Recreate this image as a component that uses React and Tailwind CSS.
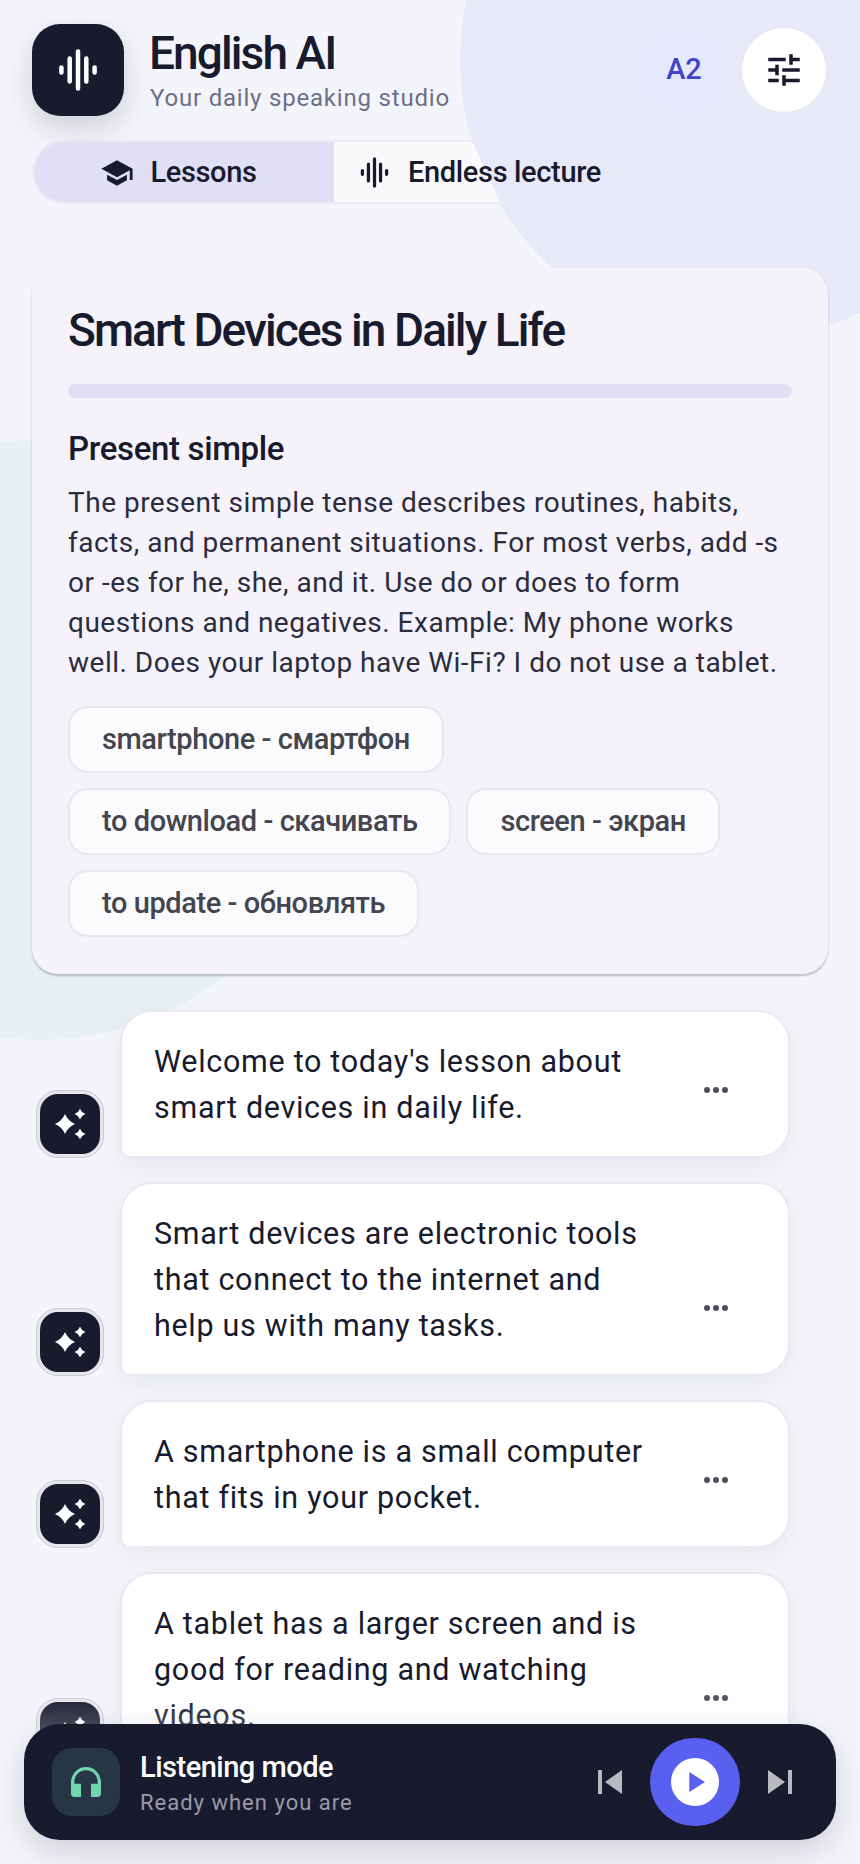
import { MdSchool, MdTune, MdHeadphones, MdSkipPrevious, MdSkipNext, MdPlayArrow } from "react-icons/md";

const chips = [
  ["smartphone - смартфон"],
  ["to download - скачивать", "screen - экран"],
  ["to update - обновлять"],
];

const messages = [
  { text: "Welcome to today's lesson about smart devices in daily life." },
  { text: "Smart devices are electronic tools that connect to the internet and help us with many tasks." },
  { text: "A smartphone is a small computer that fits in your pocket." },
  { text: "A tablet has a larger screen and is good for reading and watching videos." },
];

function Bars({ className }) {
  return (
    <svg viewBox="0 0 48 48" className={className} fill="none" stroke="currentColor" strokeWidth="4.5" strokeLinecap="round">
      <path d="M7.4 21.5v5M15.7 12.5v23M24 5.5v37M32.3 12.5v23M40.6 21.5v5" />
    </svg>
  );
}

function Sparkles() {
  return (
    <svg viewBox="0 0 40 40" className="h-[40px] w-[40px]" fill="white">
      <path d="M15 10Q18 17 25 20Q18 23 15 30Q12 23 5 20Q12 17 15 10Z" />
      <path d="M30 4.5Q31.5 8.5 35.5 10Q31.5 11.5 30 15.5Q28.5 11.5 24.5 10Q28.5 8.5 30 4.5Z" />
      <path d="M30 24.5Q31.5 28.5 35.5 30Q31.5 31.5 30 35.5Q28.5 31.5 24.5 30Q28.5 28.5 30 24.5Z" />
    </svg>
  );
}

function Message({ text }) {
  return (
    <div className="flex items-end">
      <div className="flex h-[68px] w-[68px] shrink-0 items-center justify-center rounded-[22px] border border-[#c9c9d2] bg-[#e7e7eb]">
        <div className="flex h-[60px] w-[60px] items-center justify-center rounded-[18px] bg-[#181a2e]">
          <Sparkles />
        </div>
      </div>
      <div className="ml-[16px] flex w-[670px] items-end rounded-[32px] rounded-bl-[10px] border-2 border-[#e9e8f3] bg-white pb-[25px] pl-[32px] pr-[60px] pt-[27px] shadow-[0_8px_24px_rgba(24,26,46,0.06)]">
        <p className="min-w-0 flex-1 text-[30.5px] leading-[46px] tracking-[0.7px] text-[#181a2e]">{text}</p>
        <div className="mb-[38px] ml-[36px] flex shrink-0 gap-[3px]">
          <span className="h-[6px] w-[6px] rounded-full bg-[#4b4c5e]"></span>
          <span className="h-[6px] w-[6px] rounded-full bg-[#4b4c5e]"></span>
          <span className="h-[6px] w-[6px] rounded-full bg-[#4b4c5e]"></span>
        </div>
      </div>
    </div>
  );
}

export default function App() {
  return (
    <div className="relative h-[1864px] w-[860px] overflow-hidden bg-[#f4f5fb] font-['Roboto',sans-serif] text-[#181a2e]">
      {/* background circles */}
      <div className="absolute left-[460px] top-[-220px] h-[560px] w-[560px] rounded-full bg-[#e7e9f8]"></div>
      <div className="absolute left-[-260px] top-[440px] h-[600px] w-[600px] rounded-full bg-[#e7f1f2]"></div>

      <div className="relative px-[32px] pt-[24px]">
        <header className="flex h-[92px] items-center">
          <div className="flex h-[92px] w-[92px] items-center justify-center rounded-[28px] bg-[#181a2e] shadow-[0_12px_28px_rgba(24,26,46,0.16)]">
            <Bars className="h-[48px] w-[48px] text-white" />
          </div>
          <div className="ml-[25px] flex flex-col">
            <h1 className="text-[46px] font-medium leading-[50px] tracking-[-1.9px]">English AI</h1>
            <p className="ml-[1px] mt-[6px] text-[24px] leading-[28px] tracking-[0.8px] text-[#6d6f88]">Your daily speaking studio</p>
          </div>
          <div className="ml-auto mr-[12px] flex h-[84px] w-[90px] items-center justify-center rounded-full bg-[#e6e8fb] text-[29px] font-medium text-[#3f44c9]">A2</div>
          <button className="mr-[1px] flex h-[86px] w-[86px] items-center justify-center rounded-full border border-[#e8e8f0] bg-white">
            <MdTune className="h-[42px] w-[42px]" />
          </button>
        </header>

        <nav className="mt-[24px] flex h-[64px] w-[600px] overflow-hidden rounded-full border-2 border-[#ebebf3]">
          <div className="flex w-[300px] items-center justify-center gap-[16px] bg-[#e1dff6] pr-[11px] pt-[1px] text-[29px] font-medium tracking-[-0.35px]">
            <MdSchool className="h-[34px] w-[34px]" />
            Lessons
          </div>
          <div className="flex flex-1 items-center justify-center gap-[16px] bg-[linear-gradient(65.6deg,#fafafd_151px,transparent_151px)] pr-[6px] pt-[1px] text-[29px] font-medium tracking-[-0.35px]">
            <Bars className="h-[35px] w-[35px]" />
            Endless lecture
          </div>
        </nav>

        <section className="mt-[64px] w-[796px] rounded-[26px] bg-[#f5f2f9] px-[36px] pb-[37px] pt-[36px] shadow-[0_2px_2px_rgba(24,26,46,0.25)]">
          <h2 className="text-[46px] font-medium leading-[52px] tracking-[-1.9px]">Smart Devices in Daily Life</h2>
          <div className="mt-[28px] h-[14px] rounded-full bg-[#e1dff6]"></div>
          <h3 className="mt-[31px] text-[33px] font-medium leading-[40px] tracking-[-0.35px]">Present simple</h3>
          <p className="mt-[14px] text-[28px] leading-[40px] tracking-[0.5px] text-[#2a2c40]">
            The present simple tense describes routines, habits, facts, and permanent situations. For most verbs, add -s or -es for he, she, and it. Use do or does to form questions and negatives. Example: My phone works well. Does your laptop have Wi-Fi? I do not use a tablet.
          </p>
          <div className="mt-[23px] flex flex-col gap-[15px]">
            {chips.map((row, i) => (
              <div key={i} className="flex gap-[15px]">
                {row.map((chip) => (
                  <span key={chip} className="flex h-[67px] items-center rounded-[20px] border-2 border-[#e7e6f1] bg-[#fbfbfe] px-[32px] pt-[1px] text-[29px] font-medium tracking-[-0.42px] text-[#44454f]">
                    {chip}
                  </span>
                ))}
              </div>
            ))}
          </div>
        </section>

        <div className="mt-[36px] flex flex-col gap-[24px] pl-[4px]">
          {messages.map((m) => (
            <Message key={m.text} text={m.text} />
          ))}
        </div>
      </div>

      {/* fade + player float over the list */}
      <div className="absolute bottom-0 left-0 right-0 h-[174px] bg-gradient-to-b from-transparent to-[#f4f5fb]"></div>
      <div className="absolute bottom-[24px] left-[24px] flex h-[116px] w-[812px] items-center rounded-[36px] bg-[#181a2e] pl-[28px] pr-[32px] shadow-[0_12px_32px_rgba(24,26,46,0.16)]">
        <div className="flex h-[68px] w-[68px] items-center justify-center rounded-[20px] bg-[#273644]">
          <MdHeadphones className="h-[40px] w-[40px] text-[#6fd6ae]" />
        </div>
        <div className="ml-[20px] flex flex-col pt-[2px]">
          <span className="text-[29px] font-medium leading-[36px] tracking-[-0.5px] text-white">Listening mode</span>
          <span className="mt-[4px] text-[22px] leading-[28px] tracking-[1px] text-[#9a9aa8]">Ready when you are</span>
        </div>
        <div className="ml-auto flex items-center gap-[16px]">
          <MdSkipPrevious className="h-[48px] w-[48px] text-[#b9b9c0]" />
          <button className="flex h-[88px] w-[90px] items-center justify-center rounded-full bg-[#5960f0]">
            <span className="flex h-[48px] w-[48px] items-center justify-center rounded-full bg-white">
              <MdPlayArrow className="h-[34px] w-[34px] text-[#5960f0]" />
            </span>
          </button>
          <MdSkipNext className="h-[48px] w-[48px] text-[#b9b9c0]" />
        </div>
      </div>
    </div>
  );
}
